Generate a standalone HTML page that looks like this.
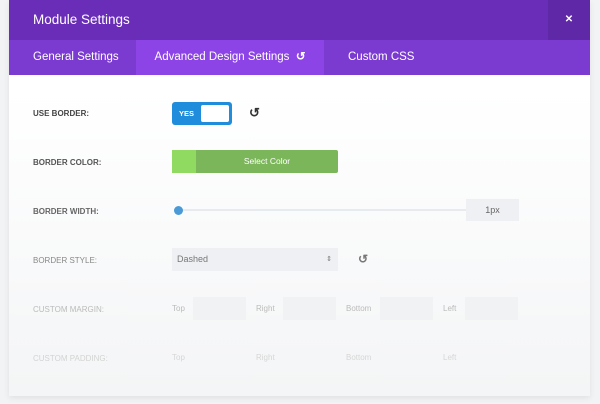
<!DOCTYPE html><html><head><style>
body{margin:0;width:600px;height:404px;overflow:hidden;background:#f2f3f5;font-family:"Liberation Sans",sans-serif;position:relative}
.p{position:absolute;left:9px;top:0;width:581px;height:396px;background:linear-gradient(#fff 90px,#f6f7f8 330px,#f4f5f6);box-shadow:0 2px 6px rgba(0,0,0,.08)}
.hd{position:absolute;left:0;top:0;width:581px;height:40px;background:#6a2db8;color:#fff;font-size:13.5px;line-height:40px}
.hd span{position:absolute;left:24px}
.x{position:absolute;right:0;top:0;width:42px;height:40px;background:#5f28a6;text-align:center;font-size:10px;font-weight:bold}
.tb{position:absolute;left:0;top:40px;width:581px;height:35px;background:#7b3bd0;color:#fff;font-size:11.5px;line-height:35px}
.tb div{position:absolute;top:0;height:35px}
.l{position:absolute;left:24px;font-size:8px;font-weight:bold;color:#444}
.a{position:absolute}
.in{position:absolute;background:#eef0f3;height:23px}
.s{position:absolute;font-size:8px}
</style></head><body><div class="p">
<div class="hd"><span>Module Settings</span><div class="x">✕</div></div>
<div class="tb"><div style="left:24px">General Settings</div><div style="left:127px;width:188px;background:#8d44e6;text-align:center">Advanced Design Settings &nbsp;<b>↺</b></div><div style="left:339px">Custom CSS</div></div>
<div class="l" style="top:109px">USE BORDER:</div>
<div class="a" style="left:163px;top:102px;width:60px;height:23px;background:#1f8ddb;border-radius:3px"><span style="position:absolute;left:7px;top:7px;color:#fff;font-size:7.5px;font-weight:bold">YES</span><div style="position:absolute;left:29px;top:3px;width:28px;height:17px;background:#fff;border-radius:2px"></div></div>
<div class="a" style="left:240px;top:105px;font-size:13px;font-weight:bold;color:#333">↺</div>
<div class="l" style="top:158px;color:#555">BORDER COLOR:</div>
<div class="a" style="left:163px;top:150px;width:166px;height:23px;background:#7cb65a;border-radius:2px;color:#fff;font-size:8.5px;line-height:23px;text-align:center"><div style="position:absolute;left:0;top:0;width:24px;height:23px;background:#91da62"></div><span style="margin-left:24px">Select Color</span></div>
<div class="l" style="top:207px;color:#666">BORDER WIDTH:</div>
<div class="a" style="left:170px;top:209px;width:288px;height:2px;background:#e8ebee"></div>
<div class="a" style="left:165px;top:206px;width:9px;height:9px;border-radius:50%;background:#4a9ad8"></div>
<div class="in" style="left:457px;top:199px;width:53px;height:22px;font-size:9px;color:#666;text-align:center;line-height:22px">1px</div>
<div class="l" style="top:256px;color:#888;font-weight:normal">BORDER STYLE:</div>
<div class="in" style="left:163px;top:248px;width:166px;font-size:9px;color:#777;line-height:23px"><span style="margin-left:5px">Dashed</span><span style="position:absolute;right:6px;font-size:7px">⇕</span></div>
<div class="a" style="left:349px;top:252px;font-size:12px;font-weight:bold;color:#777">↺</div>
<div class="l" style="top:305px;color:#bbb;font-weight:normal">CUSTOM MARGIN:</div>
<div class="l" style="top:354px;color:#d3d3d3;font-weight:normal">CUSTOM PADDING:</div>
<div class="s" style="left:163px;top:304px;color:#bbb">Top</div><div class="in" style="left:184px;top:297px;width:53px;background:#f1f2f4"></div>
<div class="s" style="left:247px;top:304px;color:#bbb">Right</div><div class="in" style="left:274px;top:297px;width:53px;background:#f1f2f4"></div>
<div class="s" style="left:337px;top:304px;color:#bbb">Bottom</div><div class="in" style="left:371px;top:297px;width:53px;background:#f1f2f4"></div>
<div class="s" style="left:434px;top:304px;color:#bbb">Left</div><div class="in" style="left:456px;top:297px;width:53px;background:#f1f2f4"></div>
<div class="s" style="left:163px;top:353px;color:#d6d6d6">Top</div>
<div class="s" style="left:247px;top:353px;color:#d6d6d6">Right</div>
<div class="s" style="left:337px;top:353px;color:#d6d6d6">Bottom</div>
<div class="s" style="left:434px;top:353px;color:#d6d6d6">Left</div>
</div></body></html>
